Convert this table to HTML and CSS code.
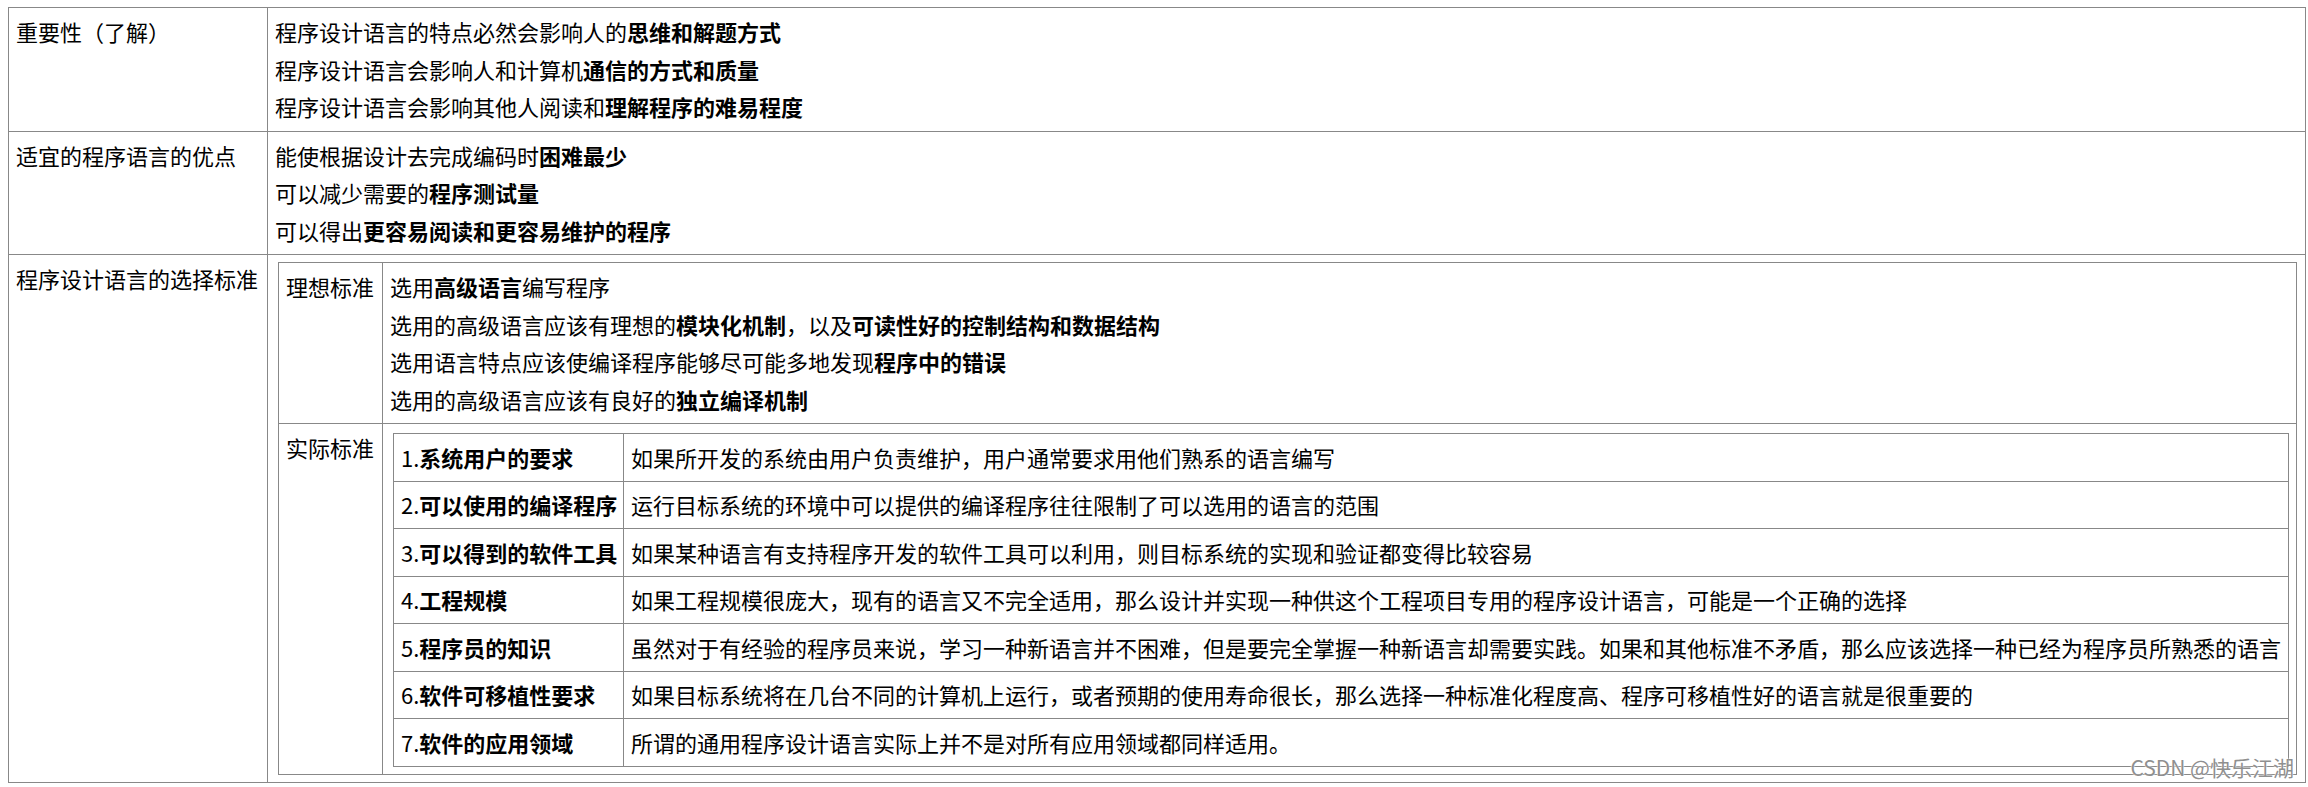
FILE: index.html
```html
<!DOCTYPE html>
<html lang="zh-CN">
<head>
<meta charset="utf-8">
<title>程序设计语言</title>
<link rel="stylesheet" href="styles.css">
</head>
<body>
<div class="page">
  <div class="grid outer">
    <div class="cell label">重要性（了解）</div>
    <div class="cell">
      <div class="line">程序设计语言的特点必然会影响人的<b>思维和解题方式</b></div>
      <div class="line">程序设计语言会影响人和计算机<b>通信的方式和质量</b></div>
      <div class="line">程序设计语言会影响其他人阅读和<b>理解程序的难易程度</b></div>
    </div>

    <div class="cell label">适宜的程序语言的优点</div>
    <div class="cell">
      <div class="line">能使根据设计去完成编码时<b>困难最少</b></div>
      <div class="line">可以减少需要的<b>程序测试量</b></div>
      <div class="line">可以得出<b>更容易阅读和更容易维护的程序</b></div>
    </div>

    <div class="cell label">程序设计语言的选择标准</div>
    <div class="cell holder-outer">
      <div class="grid mid">
        <div class="cell label">理想标准</div>
        <div class="cell">
          <div class="line">选用<b>高级语言</b>编写程序</div>
          <div class="line">选用的高级语言应该有理想的<b>模块化机制</b>，以及<b>可读性好的控制结构和数据结构</b></div>
          <div class="line">选用语言特点应该使编译程序能够尽可能多地发现<b>程序中的错误</b></div>
          <div class="line">选用的高级语言应该有良好的<b>独立编译机制</b></div>
        </div>

        <div class="cell label">实际标准</div>
        <div class="cell holder-mid">
          <div class="grid inner">
            <div class="cell row">1.<b>系统用户的要求</b></div>
            <div class="cell row">如果所开发的系统由用户负责维护，用户通常要求用他们熟系的语言编写</div>
            <div class="cell row">2.<b>可以使用的编译程序</b></div>
            <div class="cell row">运行目标系统的环境中可以提供的编译程序往往限制了可以选用的语言的范围</div>
            <div class="cell row">3.<b>可以得到的软件工具</b></div>
            <div class="cell row">如果某种语言有支持程序开发的软件工具可以利用，则目标系统的实现和验证都变得比较容易</div>
            <div class="cell row">4.<b>工程规模</b></div>
            <div class="cell row">如果工程规模很庞大，现有的语言又不完全适用，那么设计并实现一种供这个工程项目专用的程序设计语言，可能是一个正确的选择</div>
            <div class="cell row">5.<b>程序员的知识</b></div>
            <div class="cell row">虽然对于有经验的程序员来说，学习一种新语言并不困难，但是要完全掌握一种新语言却需要实践。如果和其他标准不矛盾，那么应该选择一种已经为程序员所熟悉的语言</div>
            <div class="cell row">6.<b>软件可移植性要求</b></div>
            <div class="cell row">如果目标系统将在几台不同的计算机上运行，或者预期的使用寿命很长，那么选择一种标准化程度高、程序可移植性好的语言就是很重要的</div>
            <div class="cell row">7.<b>软件的应用领域</b></div>
            <div class="cell row">所谓的通用程序设计语言实际上并不是对所有应用领域都同样适用。</div>
          </div>
        </div>
      </div>
    </div>
  </div>
  <div class="watermark">CSDN @快乐江湖</div>
</div>
</body>
</html>
```

FILE: styles.css
```css
html, body {
  margin: 0;
  padding: 0;
  background: #ffffff;
}

body {
  font-family: "Noto Sans CJK SC", "Noto Sans", sans-serif;
  font-size: 22px;
  color: #000000;
  width: 2308px;
  height: 787px;
  overflow: hidden;
}

.page {
  position: relative;
  padding: 7px 0 0 8px;
  height: 780px;
}

.grid {
  display: grid;
  box-sizing: border-box;
  border-top: 1px solid #888888;
  border-left: 1px solid #888888;
}

.outer {
  width: 2298px;
  grid-template-columns: 259px 1fr;
}

.mid {
  grid-template-columns: 104px 1fr;
}

.inner {
  grid-template-columns: 230px 1fr;
}

.cell {
  box-sizing: border-box;
  border-right: 1px solid #888888;
  border-bottom: 1px solid #888888;
  padding: 5px 7px 5px 7px;
  line-height: 37.5px;
  white-space: nowrap;
  min-width: 0;
}

.line {
  height: 37.5px;
}

b {
  font-weight: 700;
}

.holder-outer {
  padding: 7px 8px 7px 10px;
}

.holder-mid {
  padding: 9px 7px 7px 10px;
}

.row {
  padding: 4.5px 7px 4.5px 7px;
}

.watermark {
  position: absolute;
  right: 14px;
  top: 754px;
  font-size: 21px;
  line-height: 26px;
  color: #8f8f8f;
  text-shadow: 0 0 1px #ffffff, 0 0 2px #ffffff;
  white-space: nowrap;
}
```
